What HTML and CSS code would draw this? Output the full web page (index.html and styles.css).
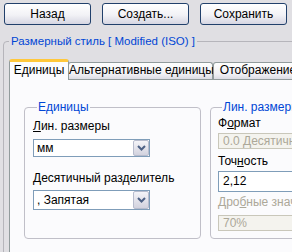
FILE: index.html
```html
<!DOCTYPE html>
<html>
<head>
<meta charset="utf-8">
<link rel="stylesheet" href="styles.css">
</head>
<body>
<div class="toolbar">
  <button class="btn">Назад</button>
  <button class="btn">Создать...</button>
  <button class="btn">Сохранить</button>
</div>
<fieldset class="outer">
  <legend class="gtitle main">Размерный стиль [ Modified (ISO) ]</legend>
  <div class="tabs">
    <div class="tab active">Единицы</div>
    <div class="tab t2">Альтернативные единицы</div>
    <div class="tab t3">Отображение</div>
  </div>
  <div class="panel">
    <fieldset class="grp grp-left">
      <legend class="gtitle">Единицы</legend>
      <div class="label"><u>Л</u>ин. размеры</div>
      <div class="combo c1"><span class="val">мм</span><span class="arrow"><svg width="9" height="6" viewBox="0 0 9 6"><path d="M1 1 L4.5 4.5 L8 1" fill="none" stroke="#4d6185" stroke-width="2"/></svg></span></div>
      <div class="label label2"><u>Д</u>есятичный разделитель</div>
      <div class="combo c2"><span class="val">, Запятая</span><span class="arrow"><svg width="9" height="6" viewBox="0 0 9 6"><path d="M1 1 L4.5 4.5 L8 1" fill="none" stroke="#4d6185" stroke-width="2"/></svg></span></div>
    </fieldset>
    <fieldset class="grp grp-right">
      <legend class="gtitle">Лин. размеры</legend>
      <div class="rlabel l1">Ф<u>о</u>рмат</div>
      <div class="rbox disabled b1">0.0 Десятичные</div>
      <div class="rlabel l2">Точ<u>н</u>ость</div>
      <div class="rbox input">2,12</div>
      <div class="rlabel dis l3">Дро<u>б</u>ные значения</div>
      <div class="rbox disabled b3">70%</div>
    </fieldset>
  </div>
</fieldset>
</body>
</html>
```

FILE: styles.css
```css
html, body {
  margin: 0;
  padding: 0;
  background: #e0dfe3;
  font-family: "Liberation Sans", Arial, sans-serif;
  font-size: 11px;
  line-height: 13px;
  color: #000;
  overflow: hidden;
  width: 292px;
  height: 252px;
}
.toolbar {
  display: flex;
  gap: 11px;
  padding: 3px 0 0 4px;
}
.btn {
  width: 87px;
  height: 22px;
  border: 1px solid #21406b;
  border-radius: 3px;
  background: linear-gradient(#ffffff, #f2f2f6 55%, #d6d6e2);
  font: inherit;
  font-size: 12px;
  color: #000;
  padding: 0;
}
.outer {
  margin: 10px -60px 0 3px;
  padding: 0 0 0 5px;
  border: 1px solid #b6b5bb;
  border-radius: 4px;
  height: 260px;
  min-width: 0;
}
.gtitle {
  color: #0046d5;
  padding: 0 2px;
  margin-left: 0;
  font-size: 12px;
  line-height: 13px;
}
.gtitle.main { font-size: 11.5px; }
.tabs {
  display: flex;
  align-items: flex-end;
  margin-top: 11px;
  height: 20px;
  position: relative;
  z-index: 1;
}
.tab {
  box-sizing: border-box;
  height: 17px;
  line-height: 15px;
  border: 1px solid #919b9c;
  border-bottom: none;
  border-radius: 3px 3px 0 0;
  background: linear-gradient(#fefefe, #f0f0f4 70%, #dcdce4);
  white-space: nowrap;
  text-align: center;
  font-size: 12px;
  flex: none;
}
.tab.active {
  box-sizing: border-box;
  width: 60px;
  height: 21px;
  margin-bottom: -1px;
  background: #fcfcfe;
  border-top: 3px solid #ffc83c;
  line-height: 17px;
}
.tab.t2 { width: 145px; margin-left: -1px; }
.tab.t3 { width: 90px; margin-left: 0; }
.panel {
  border: 1px solid #919b9c;
  background: #fbfbfd;
  height: 200px;
  display: flex;
  gap: 9px;
  padding: 21px 0 0 14px;
}
.grp {
  margin: 0;
  border: 1px solid #c0bfc8;
  border-radius: 4px;
  box-sizing: border-box;
  height: 138px;
  padding: 0;
  min-width: 0;
}
.grp-left {
  width: 177px;
  padding: 6px 0 0 8px;
}
.grp .gtitle { margin-left: 4px; padding: 0 1px; }
.grp-right {
  width: 120px;
  flex: none;
  padding: 0 0 0 7px;
}
.label { height: 13px; font-size: 12px; }
.label2 { margin-top: 15px; }
.combo {
  box-sizing: border-box;
  display: flex;
  width: 117px;
  height: 18px;
  border: 1px solid #7f9db9;
  background: #fff;
}
.c1 { margin-top: 6px; }
.c2 { margin-top: 5px; height: 20px; }
.combo .val {
  flex: 1;
  padding-left: 3px;
  line-height: 16px;
  font-size: 12px;
}
.c2 .val { line-height: 18px; }
.arrow {
  box-sizing: border-box;
  width: 16px;
  margin: 0;
  border: 1px solid #b7bccd;
  border-radius: 2px;
  background: linear-gradient(#f4f4f8, #d2d2de);
  display: flex;
  align-items: center;
  justify-content: center;
}
.rlabel { height: 13px; white-space: nowrap; font-size: 12px; }
.rlabel.dis { color: #aca899; }
.l1 { margin-top: 3px; }
.rbox {
  box-sizing: border-box;
  height: 16px;
  width: 120px;
  padding-left: 4px;
  line-height: 14px;
  white-space: nowrap;
  font-size: 12px;
}
.b1 { margin-top: 3px; }
.l2 { margin-top: 6px; }
.rbox.disabled {
  border: 1px solid #c9c7ba;
  background: #f4f3ee;
  color: #aca899;
}
.rbox.input {
  margin-top: 3px;
  border: 1px solid #7f9db9;
  background: #fff;
  height: 21px;
  line-height: 19px;
}
.l3 { margin-top: 4px; }
.b3 { margin-top: 6px; }
```
